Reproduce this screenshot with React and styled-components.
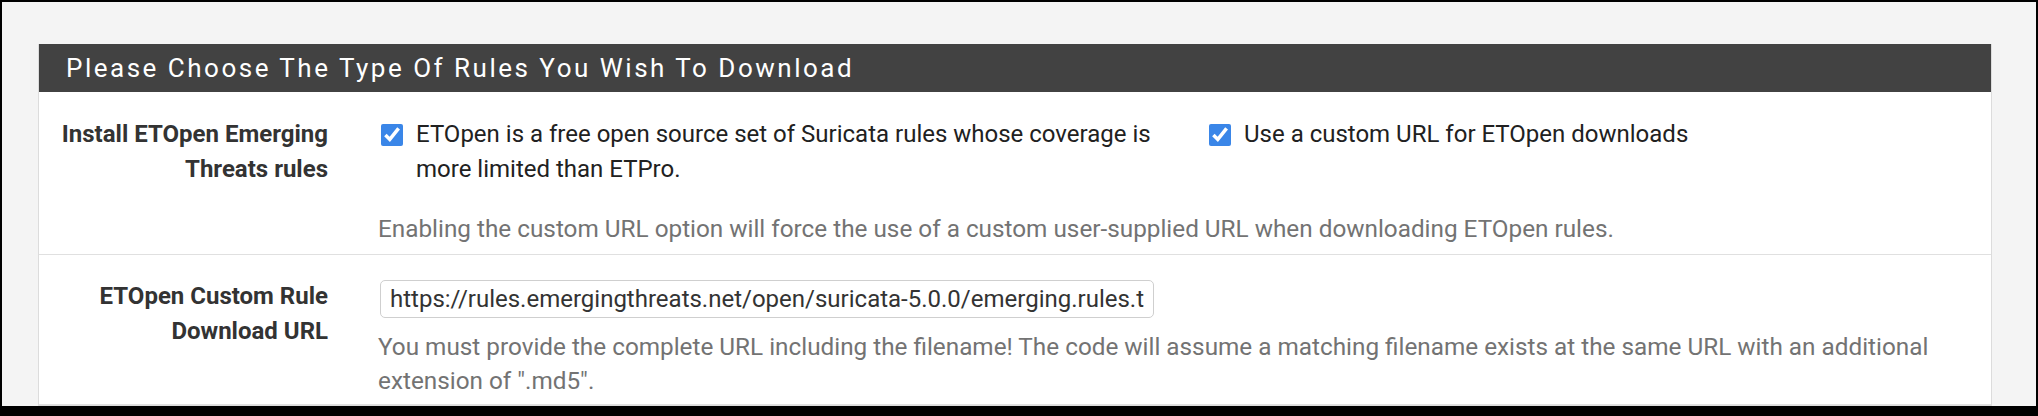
import React from "react";
import styled, { createGlobalStyle } from "styled-components";

const GlobalStyle = createGlobalStyle`
  html, body {
    margin: 0;
    padding: 0;
    background: #000;
  }
  * {
    box-sizing: border-box;
  }
`;

const Frame = styled.div`
  width: 2038px;
  height: 416px;
  border: 2px solid #000;
  border-bottom-width: 10px;
  background: #f4f4f4;
  overflow: hidden;
  font-family: Roboto, "Liberation Sans", sans-serif;
  color: #212121;
`;

const Panel = styled.section`
  margin: 42px 44px 0 36px;
  background: #fff;
  border: 1px solid #dcdcdc;
  border-top: none;
`;

const Heading = styled.h2`
  margin: 0;
  height: 48px;
  display: flex;
  align-items: center;
  padding-left: 27px;
  background: #424242;
  color: #fff;
  font-size: 26px;
  font-weight: 400;
  letter-spacing: 2.5px;
`;

const FormRow = styled.div`
  display: grid;
  grid-template-columns: 310px 1fr;
  column-gap: 29px;
  padding: ${(p) => p.$pad};
  border-bottom: 1px solid #e0e0e0;
`;

const Label = styled.div`
  padding-right: 21px;
  text-align: right;
  font-weight: 700;
  font-size: 24px;
  line-height: 35px;
  color: #333;
`;

const Content = styled.div`
  padding-right: 20px;
  font-size: 24px;
  line-height: 35px;
`;

const Checks = styled.div`
  display: grid;
  grid-template-columns: 828px 1fr;
`;

const CheckItem = styled.label`
  display: flex;
  align-items: flex-start;
  gap: 13px;
  padding-left: 3px;
  padding-right: ${(p) => p.$padRight || 0}px;
`;

const Box = styled.input`
  flex: none;
  width: 22px;
  height: 22px;
  margin: 7px 0 0;
  accent-color: #3a86e8;
`;

const Help = styled.div`
  margin-top: ${(p) => p.$top}px;
  color: #737373;
  font-size: 24.3px;
  line-height: ${(p) => p.$lh || 35}px;
`;

const UrlInput = styled.input`
  display: block;
  width: 774px;
  height: 38px;
  margin: 1px 0 0 2px;
  padding: 0 9px;
  border: 1px solid #cfcfcf;
  border-radius: 5px;
  font-family: Roboto, "Liberation Sans", sans-serif;
  font-size: 24px;
  color: #333;
  background: #fff;
`;

export default function App() {
  return (
    <>
      <GlobalStyle />
      <Frame>
        <Panel>
          <Heading>Please Choose The Type Of Rules You Wish To Download</Heading>

          <FormRow $pad="25px 0 8px">
            <Label>
              Install ETOpen Emerging
              <br />
              Threats rules
            </Label>
            <Content>
              <Checks>
                <CheckItem $padRight={30}>
                  <Box type="checkbox" defaultChecked />
                  <span>
                    ETOpen is a free open source set of Suricata rules whose coverage is more
                    limited than ETPro.
                  </span>
                </CheckItem>
                <CheckItem>
                  <Box type="checkbox" defaultChecked />
                  <span>Use a custom URL for ETOpen downloads</span>
                </CheckItem>
              </Checks>
              <Help $top={24}>
                Enabling the custom URL option will force the use of a custom user-supplied URL
                when downloading ETOpen rules.
              </Help>
            </Content>
          </FormRow>

          <FormRow $pad="24px 0 6px">
            <Label>
              ETOpen Custom Rule
              <br />
              Download URL
            </Label>
            <Content>
              <UrlInput
                type="text"
                defaultValue="https://rules.emergingthreats.net/open/suricata-5.0.0/emerging.rules.tar.gz"
              />
              <Help $top={12} $lh={34}>
                You must provide the complete URL including the filename! The code will assume a
                matching filename exists at the same URL with an additional extension of ".md5".
              </Help>
            </Content>
          </FormRow>
        </Panel>
      </Frame>
    </>
  );
}
